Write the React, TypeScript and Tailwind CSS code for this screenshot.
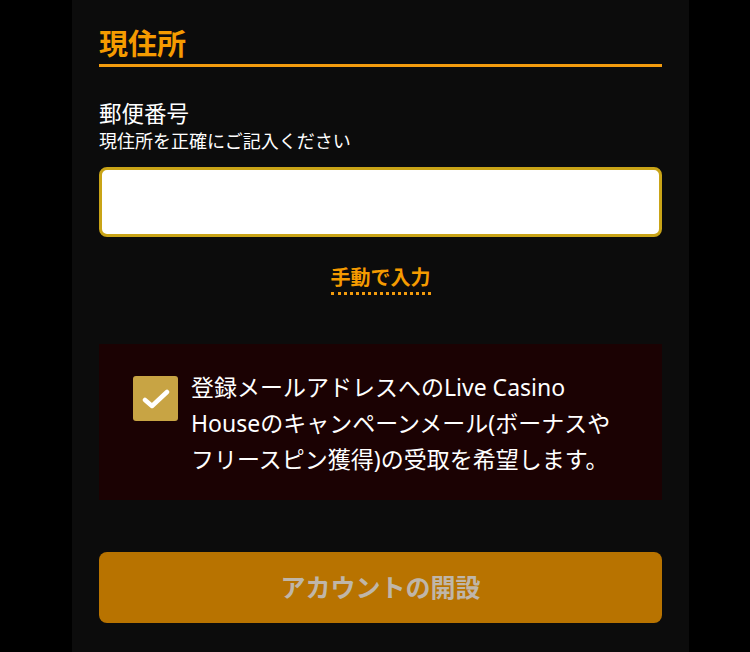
export default function App() {
  return (
    <div className="min-h-[652px] w-[750px] bg-black" style={{ fontFamily: '"Noto Sans", "Noto Sans CJK JP", sans-serif' }}>
      <div className="ml-[72px] min-h-[652px] w-[617px] bg-[#0c0c0c] px-[27px]">
        <h2 className="border-b-[3px] border-[#f39c0e] pt-[24px] text-[29px] font-bold leading-[40px] text-[#f59b00]">
          現住所
        </h2>

        <div className="mt-[33px] text-[22.5px] leading-[28px] text-white">郵便番号</div>
        <div className="text-[18px] leading-[26px] text-white">現住所を正確にご記入ください</div>

        <input
          type="text"
          className="mt-[13px] h-[70px] w-full rounded-[8px] border-[3px] border-[#c9a417] bg-white px-4 text-[20px] outline-none"
        />

        <div className="mt-[27px] flex justify-center">
          <button className="border-b-[3px] border-dotted border-[#f39c0e] text-[20px] font-bold leading-[28px] text-[#f59b00]">
            手動で入力
          </button>
        </div>

        <div className="mt-[49px] flex gap-[13px] bg-[#1b0203] pb-[23px] pl-[34px] pt-[25px]">
          <div className="mt-[7px] flex h-[45px] w-[45px] shrink-0 items-center justify-center rounded-[3px] bg-[#c8a444]">
            <svg width="28" height="22" viewBox="0 0 28 22" fill="none">
              <path d="M3 12 L10 18 L25 4" stroke="white" strokeWidth="4.5" strokeLinecap="round" strokeLinejoin="round" />
            </svg>
          </div>
          <p className="w-[428px] text-[23px] leading-[36px] text-white">
            登録メールアドレスへのLive Casino Houseのキャンペーンメール(ボーナスやフリースピン獲得)の受取を希望します。
          </p>
        </div>

        <button className="mt-[52px] flex h-[71px] w-full items-center justify-center rounded-[8px] bg-[#b87300] text-[25px] font-bold text-[#bfb6a9]">
          アカウントの開設
        </button>
      </div>
    </div>
  )
}
